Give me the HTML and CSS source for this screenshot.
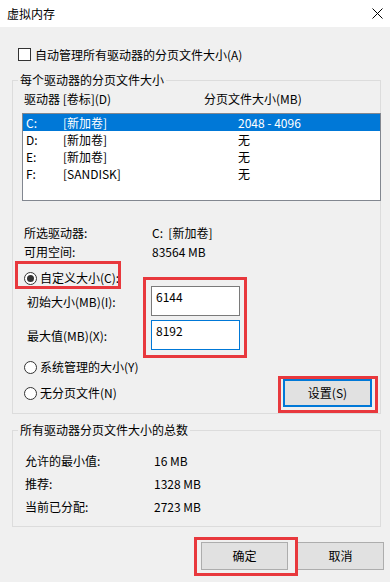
FILE: index.html
```html
<!DOCTYPE html>
<html lang="zh-CN">
<head>
<meta charset="utf-8">
<title>虚拟内存</title>
<link rel="stylesheet" href="styles.css">
</head>
<body>
<div class="window">
  <div class="titlebar">
    <span class="title">虚拟内存</span>
    <svg class="close" width="11" height="11" viewBox="0 0 11 11"><path d="M0.5 0.5 L10.5 10.5 M10.5 0.5 L0.5 10.5" stroke="#000" stroke-width="1" fill="none"/></svg>
  </div>
  <div class="content">
    <div class="check-row"><span class="checkbox"></span><span>自动管理所有驱动器的分页文件大小(A)</span></div>

    <div class="group group-drives">
      <div class="group-label">每个驱动器的分页文件大小</div>
      <div class="list-head"><span>驱动器 [卷标](D)</span><span>分页文件大小(MB)</span></div>
      <div class="list">
        <div class="list-row selected"><span>C:</span><span>[新加卷]</span><span>2048 - 4096</span></div>
        <div class="list-row"><span>D:</span><span>[新加卷]</span><span>无</span></div>
        <div class="list-row"><span>E:</span><span>[新加卷]</span><span>无</span></div>
        <div class="list-row"><span>F:</span><span>[SANDISK]</span><span>无</span></div>
      </div>
      <div class="info">
        <span>所选驱动器:</span><span>C:&nbsp;&nbsp;[新加卷]</span>
        <span>可用空间:</span><span>83564 MB</span>
      </div>
      <div class="radio-row radio-custom"><span class="radio checked"></span><span>自定义大小(C):</span></div>
      <div class="size-grid">
        <span class="size-label">初始大小(MB)(I):</span><div class="input">6144</div>
        <span class="size-label">最大值(MB)(X):</span><div class="input focused">8192</div>
      </div>
      <div class="radio-row radio-system"><span class="radio"></span><span>系统管理的大小(Y)</span></div>
      <div class="set-row">
        <div class="radio-row"><span class="radio"></span><span>无分页文件(N)</span></div>
        <div class="btn btn-default">设置(S)</div>
      </div>
    </div>

    <div class="group group-total">
      <div class="group-label">所有驱动器分页文件大小的总数</div>
      <div class="totals">
        <span>允许的最小值:</span><span>16 MB</span>
        <span>推荐:</span><span>1328 MB</span>
        <span>当前已分配:</span><span>2723 MB</span>
      </div>
    </div>

    <div class="footer">
      <div class="btn">确定</div>
      <div class="btn">取消</div>
    </div>
  </div>

  <div class="mark mark-custom"></div>
  <div class="mark mark-inputs"></div>
  <div class="mark mark-set"></div>
  <div class="mark mark-ok"></div>
</div>
</body>
</html>
```

FILE: styles.css
```css
* { box-sizing: border-box; }

html, body {
  margin: 0;
  padding: 0;
}

body {
  width: 390px;
  height: 582px;
  background: #f0f0f0;
  font-family: "Noto Sans CJK SC", "Noto Sans", sans-serif;
  font-size: 12px;
  color: #000;
  overflow: hidden;
}

.window {
  position: relative;
  width: 390px;
  height: 582px;
}

.titlebar {
  height: 27px;
  background: #fff;
  display: flex;
  align-items: center;
  justify-content: space-between;
  padding: 0 7px 0 7px;
}

.title {
  line-height: 16px;
}

.close {
  display: block;
  margin-top: -1px;
}

.content {
  padding-left: 12px;
}

.check-row {
  margin-top: 19px;
  height: 17px;
  display: flex;
  align-items: center;
  gap: 4px;
  line-height: 16px;
}

.checkbox {
  margin-left: 6px;
  width: 13px;
  height: 13px;
  border: 1px solid #333;
  background: #fff;
}

.group {
  width: 369px;
  border: 1px solid #dcdcdc;
  display: flex;
  flex-direction: column;
  align-items: flex-start;
}

.group-drives {
  margin-top: 17px;
  padding-bottom: 6px;
}

.group-label {
  margin-top: -9px;
  margin-left: 5px;
  padding: 0 2px;
  line-height: 16px;
  background: #f0f0f0;
}

.list-head {
  margin-top: 3px;
  margin-left: 11px;
  display: grid;
  grid-template-columns: 180px auto;
  line-height: 16px;
}

.list {
  margin-top: 6px;
  margin-left: 9px;
  width: 359px;
  height: 88px;
  border: 1px solid #828790;
  background: #fff;
}

.list-row {
  height: 17px;
  display: grid;
  grid-template-columns: 37px 175px auto;
  padding-left: 3px;
  line-height: 17px;
}

.list-row.selected {
  background: #0078d7;
  color: #fff;
}

.info {
  margin-top: 22px;
  margin-left: 11px;
  display: grid;
  grid-template-columns: 128px auto;
  line-height: 19px;
}

.radio-row {
  height: 16px;
  display: flex;
  align-items: center;
  gap: 3px;
  line-height: 16px;
}

.radio-custom {
  margin-top: 9px;
  margin-left: 11px;
}

.radio {
  width: 13px;
  height: 13px;
  border: 1px solid #333;
  border-radius: 50%;
  background: #fff;
  display: flex;
  align-items: center;
  justify-content: center;
}

.radio.checked::after {
  content: "";
  width: 7px;
  height: 7px;
  border-radius: 50%;
  background: #333;
}

.size-grid {
  margin-left: 14px;
  display: grid;
  grid-template-columns: 124px 89px;
  row-gap: 4px;
  align-items: center;
}

.size-label {
  line-height: 16px;
  padding-top: 2px;
}

.input {
  height: 30px;
  border: 1px solid #7a7a7a;
  background: #fff;
  padding: 2px 0 0 4px;
  line-height: 16px;
}

.input.focused {
  border-color: #0078d7;
}

.radio-system {
  margin-top: 9px;
  margin-left: 11px;
}

.set-row {
  margin-top: 4px;
  margin-left: 11px;
  width: 348px;
  display: flex;
  align-items: center;
  justify-content: space-between;
}

.btn {
  width: 87px;
  height: 28px;
  border: 1px solid #adadad;
  background: #e1e1e1;
  display: flex;
  align-items: center;
  justify-content: center;
  line-height: 16px;
}

.btn-default {
  width: 89px;
  border: 2px solid #0078d7;
}

.group-total {
  margin-top: 16px;
  padding-bottom: 8px;
}

.totals {
  margin-top: 11px;
  margin-left: 12px;
  display: grid;
  grid-template-columns: 129px auto;
  line-height: 23px;
}

.footer {
  margin-top: 15px;
  width: 372px;
  display: flex;
  justify-content: flex-end;
  gap: 9px;
}

.mark {
  position: absolute;
  border: 3px solid #e8383d;
}

.mark-custom {
  left: 15px;
  top: 261px;
  width: 106px;
  height: 28px;
}

.mark-inputs {
  left: 143px;
  top: 277px;
  width: 104px;
  height: 81px;
}

.mark-set {
  left: 278px;
  top: 376px;
  width: 100px;
  height: 37px;
}

.mark-ok {
  left: 194px;
  top: 537px;
  width: 104px;
  height: 39px;
}
```
